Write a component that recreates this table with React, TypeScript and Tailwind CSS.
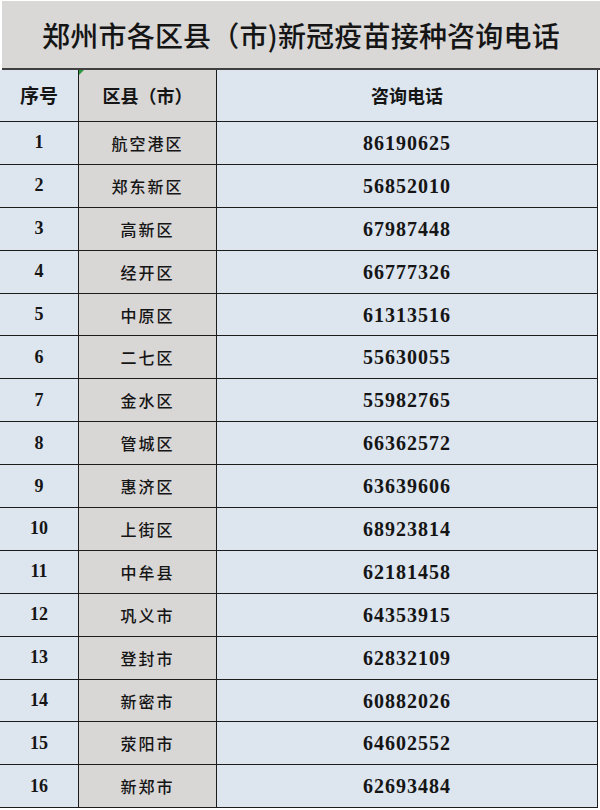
import React from "react";

const rows = [
  ["1", "航空港区", "86190625"],
  ["2", "郑东新区", "56852010"],
  ["3", "高新区", "67987448"],
  ["4", "经开区", "66777326"],
  ["5", "中原区", "61313516"],
  ["6", "二七区", "55630055"],
  ["7", "金水区", "55982765"],
  ["8", "管城区", "66362572"],
  ["9", "惠济区", "63639606"],
  ["10", "上街区", "68923814"],
  ["11", "中牟县", "62181458"],
  ["12", "巩义市", "64353915"],
  ["13", "登封市", "62832109"],
  ["14", "新密市", "60882026"],
  ["15", "荥阳市", "64602552"],
  ["16", "新郑市", "62693484"],
];

export default function App() {
  return (
    <div className="w-[600px] h-[810px] overflow-hidden bg-white text-[#151515] font-['Noto_Sans_CJK_SC',sans-serif]">
      {/* Title */}
      <div className="pt-[1px] pl-[2px]">
        <div className="h-[69px] flex items-center justify-center bg-[#d9d8d6] border-b-2 border-[#3f3f3f] text-[28px] font-medium tracking-[0.2px]">
          郑州市各区县（市)新冠疫苗接种咨询电话
        </div>
      </div>

      <div className="w-[598px]">
        {/* Header */}
        <div className="flex h-[52px] border-b border-[#1c1c1c]">
          <div className="w-[79px] shrink-0 flex items-center justify-center bg-[#dde5ef] border-r border-[#1c1c1c] text-[19px] font-semibold">
            序号
          </div>
          <div className="relative w-[138px] shrink-0 flex items-center justify-center bg-[#d9d7d5] border-r border-[#1c1c1c] text-[18px] font-semibold">
            <span className="absolute left-0 top-0 w-0 h-0 border-t-[5px] border-r-[5px] border-t-[#2e9a3e] border-r-transparent" />
            区县（市）
          </div>
          <div className="flex-1 flex items-center justify-center bg-[#dde5ef] border-r border-[#1c1c1c] text-[18px] font-semibold">
            咨询电话
          </div>
        </div>

        {/* Rows */}
        {rows.map(([no, name, phone]) => (
          <div key={no} className="flex h-[42.9px] border-b border-[#1c1c1c]">
            <div className="w-[79px] shrink-0 flex items-center justify-center bg-[#dde5ef] border-r border-[#1c1c1c] text-[18px] font-bold font-['Liberation_Serif',serif]">
              {no}
            </div>
            <div className="w-[138px] shrink-0 flex items-center justify-center bg-[#d9d7d5] border-r border-[#1c1c1c] text-[16px] font-medium tracking-[2px]">
              {name}
            </div>
            <div className="flex-1 flex items-center justify-center bg-[#dde5ef] border-r border-[#1c1c1c] text-[20px] font-bold tracking-[1px] font-['Liberation_Serif',serif]">
              {phone}
            </div>
          </div>
        ))}
      </div>
    </div>
  );
}
